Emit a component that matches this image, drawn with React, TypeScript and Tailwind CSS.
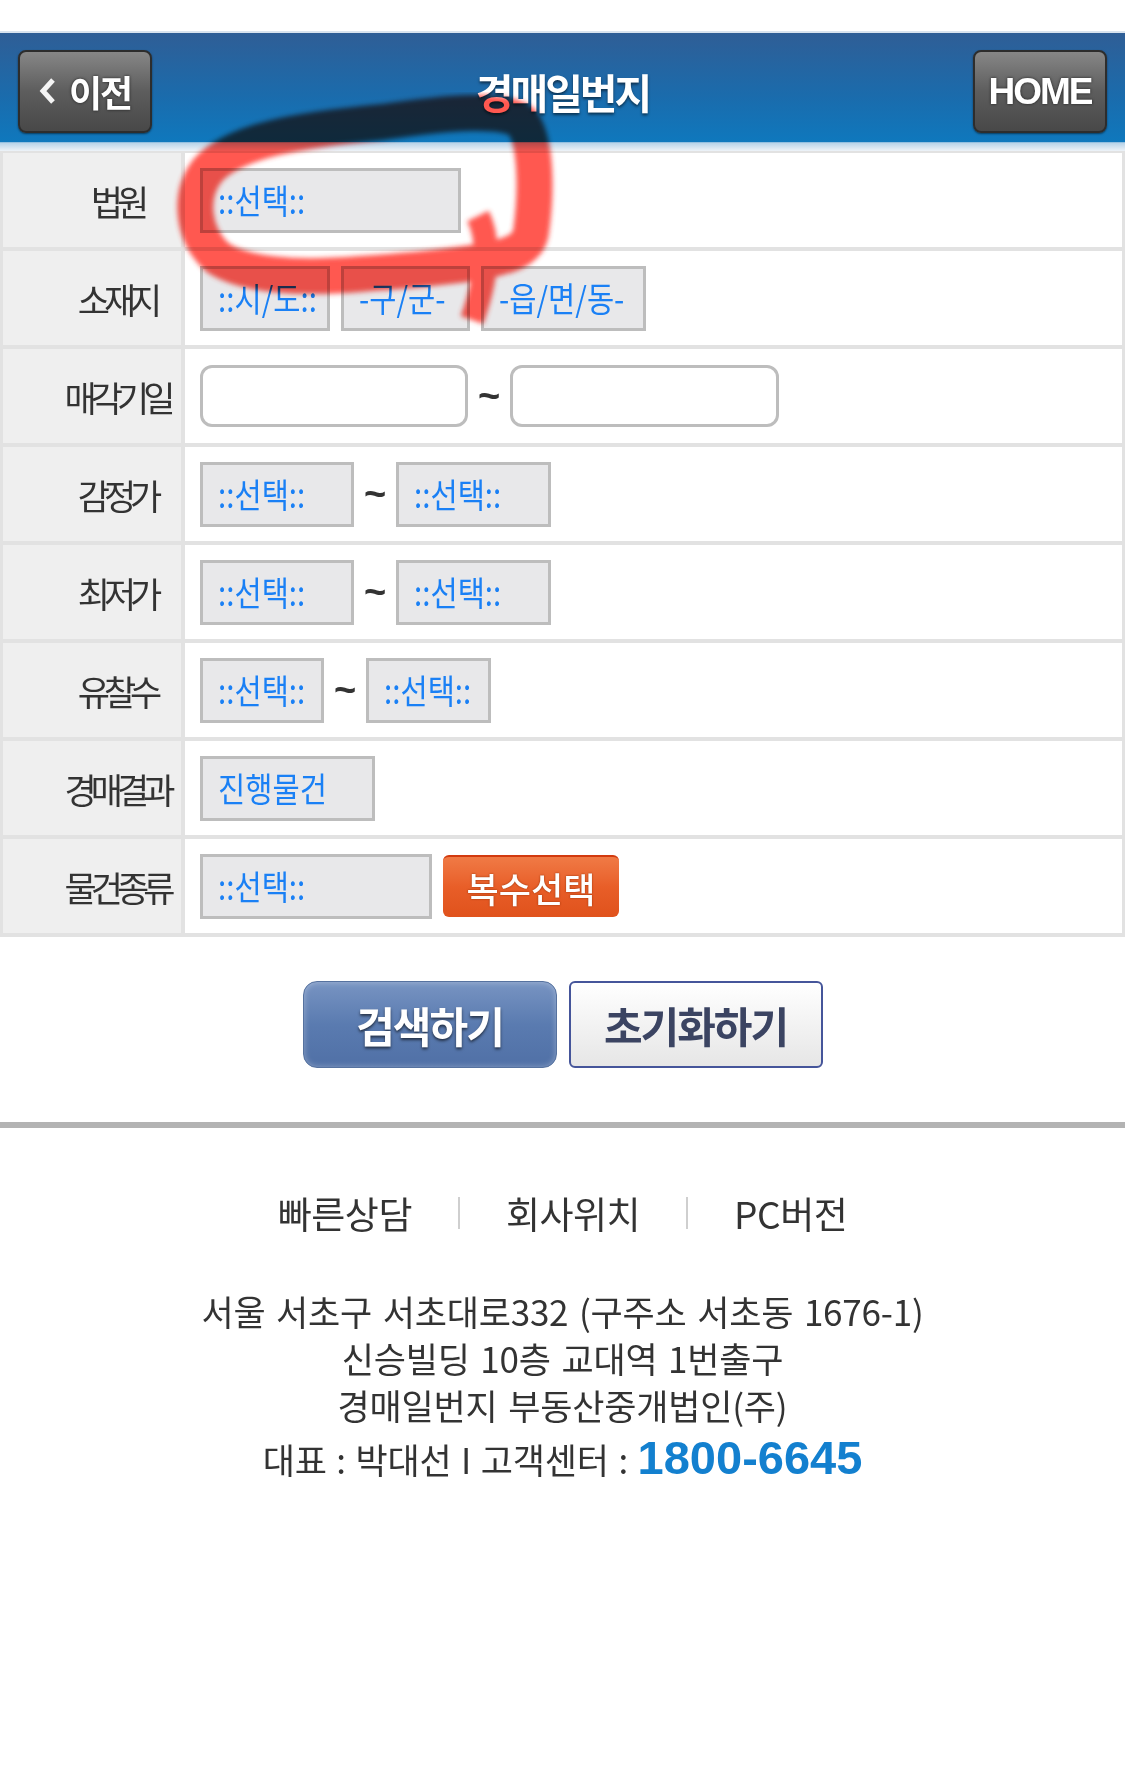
import React from "react";

function Sel({ w, children }: { w: string; children: React.ReactNode }) {
  return (
    <div
      className={`flex h-[65px] shrink-0 items-center overflow-hidden border-[3px] border-[#bdbdbd] bg-[#e8e8ea] pl-[15px] text-[34px] leading-none text-[#1a80f5] ${w}`}
    >
      <span className="inline-block origin-left scale-x-[0.87] whitespace-nowrap">{children}</span>
    </div>
  );
}

function Tilde() {
  return (
    <span className="w-[42px] shrink-0 text-center font-['Liberation_Sans',sans-serif] text-[38px] font-bold leading-none text-[#333]">
      ~
    </span>
  );
}

function Row({ label, children }: { label: string; children: React.ReactNode }) {
  return (
    <div className="flex h-[98px] border-b-4 border-[#e2e2e2]">
      <div className="flex w-[182px] shrink-0 items-center justify-center border-r-4 border-[#e2e2e2] bg-[#efefef] pl-[50px]">
        <span className="whitespace-nowrap text-[35px] leading-none tracking-[-6px] text-[#333]">{label}</span>
      </div>
      <div className="flex flex-1 items-center gap-[11px] pl-[15px]">{children}</div>
    </div>
  );
}

export default function App() {
  return (
    <div className="relative min-h-[1791px] w-[1125px] overflow-hidden bg-white font-['Noto_Sans_CJK_KR',sans-serif]">
      <div className="h-[31px] bg-white" />
      <header className="flex h-[120px] items-center justify-between border-t-2 border-[#d9e3ee] bg-[linear-gradient(to_bottom,#2f5e96_0%,#1a6cad_55%,#0f78bd_92%,#b6d2e8_93%,#eef3f8_100%)] px-[18px] pb-[2px]">
        <button className="flex h-[83px] w-[134px] items-center justify-center gap-[12px] rounded-[8px] border-2 border-[#2d2d2d] bg-gradient-to-b from-[#878787] via-[#5d5d5d] to-[#484848] shadow-[0_1px_2px_rgba(0,0,0,0.5)]">
          <svg width="18" height="28" viewBox="0 0 18 28">
            <polyline points="14,3 4,14 14,25" fill="none" stroke="#f4f4f4" strokeWidth="5" />
          </svg>
          <span className="text-[36px] font-bold leading-none tracking-[-2px] text-white [text-shadow:0_0_3px_rgba(0,0,0,0.7)]">이전</span>
        </button>
        <h1 className="text-[41px] font-bold leading-none tracking-[-3px] text-white [text-shadow:0_2px_3px_rgba(0,0,0,0.55)]">
          경매일번지
        </h1>
        <button className="flex h-[83px] w-[134px] items-center justify-center rounded-[8px] border-2 border-[#2d2d2d] bg-gradient-to-b from-[#878787] via-[#5d5d5d] to-[#484848] shadow-[0_1px_2px_rgba(0,0,0,0.5)]">
          <span className="font-['Liberation_Sans',sans-serif] text-[37px] font-bold leading-none tracking-[-2px] text-white [text-shadow:0_0_3px_rgba(0,0,0,0.7)]">
            HOME
          </span>
        </button>
      </header>

      <div className="border-x-[3px] border-t-2 border-[#e2e2e2]">
        <Row label="법원">
          <Sel w="w-[261px]">::선택::</Sel>
        </Row>
        <Row label="소재지">
          <Sel w="w-[130px]">::시/도::</Sel>
          <Sel w="w-[129px]">-구/군-</Sel>
          <Sel w="w-[165px]">-읍/면/동-</Sel>
        </Row>
        <Row label="매각기일">
          <div className="flex items-center">
            <div className="h-[62px] w-[268px] rounded-[12px] border-[3px] border-[#bdbdbd] bg-white" />
            <Tilde />
            <div className="h-[62px] w-[269px] rounded-[12px] border-[3px] border-[#bdbdbd] bg-white" />
          </div>
        </Row>
        <Row label="감정가">
          <div className="flex items-center">
            <Sel w="w-[154px]">::선택::</Sel>
            <Tilde />
            <Sel w="w-[155px]">::선택::</Sel>
          </div>
        </Row>
        <Row label="최저가">
          <div className="flex items-center">
            <Sel w="w-[154px]">::선택::</Sel>
            <Tilde />
            <Sel w="w-[155px]">::선택::</Sel>
          </div>
        </Row>
        <Row label="유찰수">
          <div className="flex items-center">
            <Sel w="w-[124px]">::선택::</Sel>
            <Tilde />
            <Sel w="w-[125px]">::선택::</Sel>
          </div>
        </Row>
        <Row label="경매결과">
          <Sel w="w-[175px]">진행물건</Sel>
        </Row>
        <Row label="물건종류">
          <Sel w="w-[232px]">::선택::</Sel>
          <button className="flex h-[62px] w-[176px] items-center justify-center rounded-[6px] border-t-2 border-[#d23a0e] bg-gradient-to-b from-[#f07a45] via-[#e85e28] to-[#e0521c] text-[35px] font-medium leading-none tracking-[0px] text-white [text-shadow:0_0_2px_#8a2a00]">
            복수선택
          </button>
        </Row>
      </div>

      <div className="flex justify-center gap-[12px] pb-[54px] pt-[44px]">
        <button className="flex h-[87px] w-[254px] items-center justify-center rounded-[14px] border border-[#56729f] bg-gradient-to-b from-[#7894c2] via-[#5a7bb0] to-[#5070a6] shadow-[inset_0_0_6px_rgba(255,255,255,0.35)]">
          <span className="text-[42px] font-bold leading-none tracking-[-2px] text-white [text-shadow:0_2px_3px_rgba(0,0,0,0.6)]">검색하기</span>
        </button>
        <button className="flex h-[87px] w-[254px] items-center justify-center rounded-[6px] border-2 border-[#45559a] bg-gradient-to-b from-[#ffffff] to-[#e6e6e6]">
          <span className="text-[42px] font-bold leading-none tracking-[-2px] text-[#3b4462]">초기화하기</span>
        </button>
      </div>

      <div className="h-[6px] bg-[#b3b3b3]" />

      <footer className="pt-[63px] text-[#333]">
        <div className="flex items-center justify-center gap-[46px] text-[37px] leading-[44px] tracking-[-0.5px]">
          <span>빠른상담</span>
          <span className="h-[32px] w-[2px] bg-[#cfcfcf]" />
          <span>회사위치</span>
          <span className="h-[32px] w-[2px] bg-[#cfcfcf]" />
          <span>PC버전</span>
        </div>
        <div className="mt-[52px] text-center text-[35px] leading-[47px] tracking-[-0.2px] [word-spacing:3px]">
          <p>서울 서초구 서초대로332 (구주소 서초동 1676-1)</p>
          <p>신승빌딩 10층 교대역 1번출구</p>
          <p>경매일번지 부동산중개법인(주)</p>
          <p className="mt-[6px] flex h-[58px] items-baseline justify-center">
            <span className="[word-spacing:2px]">대표 : 박대선 I 고객센터 :&nbsp;</span>
            <span className="font-['Liberation_Sans',sans-serif] text-[47px] font-bold tracking-[0px] text-[#1380cf]">1800-6645</span>
          </p>
        </div>
      </footer>

      <svg
        className="pointer-events-none absolute left-0 top-0 mix-blend-multiply"
        width="1125"
        height="400"
        viewBox="0 0 1125 400"
      >
        <defs>
          <filter id="soft" x="-10%" y="-10%" width="120%" height="120%">
            <feGaussianBlur stdDeviation="2.5" />
          </filter>
        </defs>
        <g filter="url(#soft)" opacity="0.85" fill="none" stroke="#ff3b30" strokeLinecap="round" strokeLinejoin="round">
          <path
            d="M 531 232 C 537 190, 536 140, 522 122 C 505 108, 450 112, 383 122 C 300 130, 235 140, 208 170 C 188 195, 192 235, 218 258 C 250 278, 310 278, 360 274 C 420 270, 490 264, 515 252 C 528 245, 530 238, 531 232 Z"
            strokeWidth="36"
          />
          <path d="M 478 216 C 490 240, 488 275, 472 320" strokeWidth="24" strokeLinecap="butt" />
        </g>
      </svg>
    </div>
  );
}
